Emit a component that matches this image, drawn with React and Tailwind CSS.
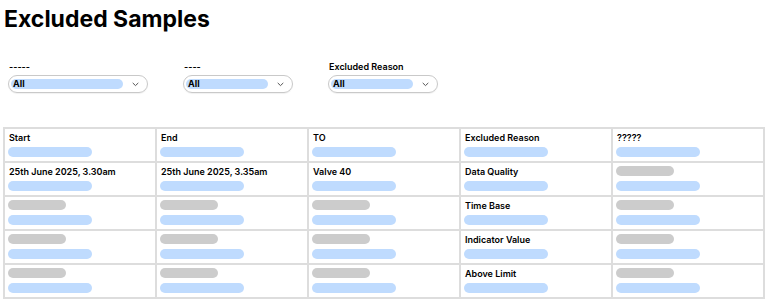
import React from 'react';

const font = { fontFamily: 'Inter, "Noto Sans", sans-serif' };

function Chevron() {
  return (
    <svg width="7" height="5" viewBox="0 0 7 5" className="shrink-0">
      <path d="M1 1.2 3.5 3.6 6 1.2" fill="none" stroke="#555" strokeWidth="1" strokeLinecap="round" strokeLinejoin="round" />
    </svg>
  );
}

function Filter({ label, width }) {
  return (
    <div className="flex flex-col">
      <div className="h-[12px] pl-[1px] text-[9px] leading-[13px] font-semibold text-black">{label}</div>
      <div
        className="mt-[3px] flex h-[18px] items-center rounded-full border border-[#c9c9c9] pl-[2px] pr-[8px] shadow-[0_1px_1px_rgba(0,0,0,0.06)]"
        style={{ width }}
      >
        <div className="flex h-[10px] flex-1 items-center rounded-full bg-[#bfdbfe] pl-[2px] text-[9px] leading-[10px] font-bold text-black">
          All
        </div>
        <div className="ml-[9px]">
          <Chevron />
        </div>
      </div>
    </div>
  );
}

function Pill({ grey }) {
  return (
    <div className={`h-[10px] rounded-full ${grey ? 'w-[58px] bg-[#cccccc]' : 'w-[84px] bg-[#bfdbfe]'}`} />
  );
}

function Cell({ text }) {
  return (
    <div className="flex h-[32px] flex-col gap-[5px] bg-white px-[3px] pt-[3px]">
      {text ? (
        <div className="h-[10px] pl-[1px] text-[9px] leading-[11px] font-semibold whitespace-nowrap text-black">{text}</div>
      ) : (
        <Pill grey />
      )}
      <Pill />
    </div>
  );
}

const rows = [
  ['Start', 'End', 'TO', 'Excluded Reason', '?????'],
  ['25th June 2025, 3.30am', '25th June 2025, 3.35am', 'Valve 40', 'Data Quality', null],
  [null, null, null, 'Time Base', null],
  [null, null, null, 'Indicator Value', null],
  [null, null, null, 'Above Limit', null],
];

export default function App() {
  return (
    <div className="h-[304px] w-[768px] overflow-hidden bg-white" style={font}>
      <h1 className="mt-[5px] pl-[4px] text-[23px] leading-[28px] font-bold text-black">Excluded Samples</h1>

      <div className="mt-[27px] flex gap-[35px] pl-[8px]">
        <Filter label="-----" width={140} />
        <Filter label="----" width={110} />
        <Filter label="Excluded Reason" width={110} />
      </div>

      <div className="mx-[3px] mt-[34px] grid w-[762px] grid-cols-5 gap-[2px] bg-[#dddddd] p-[2px]">
        {rows.map((row, i) =>
          row.map((c, j) => <Cell key={`${i}-${j}`} text={c} />)
        )}
      </div>
    </div>
  );
}
